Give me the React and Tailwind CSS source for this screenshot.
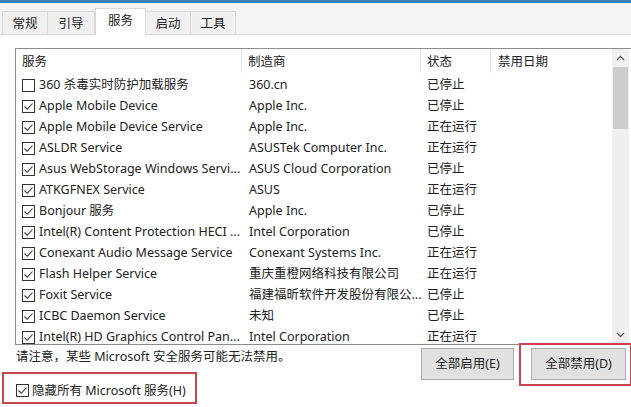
import React from "react";

const rows = [
  ["360 杀毒实时防护加载服务", "360.cn", "已停止", false],
  ["Apple Mobile Device", "Apple Inc.", "已停止", true],
  ["Apple Mobile Device Service", "Apple Inc.", "正在运行", true],
  ["ASLDR Service", "ASUSTek Computer Inc.", "正在运行", true],
  ["Asus WebStorage Windows Servi...", "ASUS Cloud Corporation", "已停止", true],
  ["ATKGFNEX Service", "ASUS", "正在运行", true],
  ["Bonjour 服务", "Apple Inc.", "已停止", true],
  ["Intel(R) Content Protection HECI ...", "Intel Corporation", "已停止", true],
  ["Conexant Audio Message Service", "Conexant Systems Inc.", "正在运行", true],
  ["Flash Helper Service", "重庆重橙网络科技有限公司", "正在运行", true],
  ["Foxit Service", "福建福昕软件开发股份有限公...", "已停止", true],
  ["ICBC Daemon Service", "未知", "已停止", true],
  ["Intel(R) HD Graphics Control Pan...", "Intel Corporation", "正在运行", true],
];

function Box({ checked }) {
  return (
    <span className="w-[13px] h-[13px] border border-[#333] bg-white flex items-center justify-center shrink-0">
      {checked && (
        <svg width="11" height="11" viewBox="0 0 11 11">
          <path d="M1.5 5.5 L4.3 8.3 L9.5 2.5" fill="none" stroke="#333" strokeWidth="1.1" />
        </svg>
      )}
    </span>
  );
}

const tabs = [
  ["常规", "w-[46px]"],
  ["引导", "w-[48px]"],
  ["服务", "w-[51px]"],
  ["启动", "w-[46px]"],
  ["工具", "w-[46px]"],
];

export default function App() {
  return (
    <div
      className="w-[631px] h-[407px] bg-white relative overflow-hidden text-[12.5px] text-[#222] leading-none"
      style={{ fontFamily: '"Noto Sans", "Noto Sans CJK SC", sans-serif' }}
    >
      <div className="h-[3px] bg-[#3b80b8]" />
      <div className="h-[32px] bg-[#f3f3f3] flex items-end pl-[2px] border-b border-[#d9d9d9]">
        {tabs.map(([t, w], i) =>
          i === 2 ? (
            <div
              key={t}
              className={`${w} h-[27px] -mb-px bg-white border border-b-0 border-[#d9d9d9] flex items-center justify-center pb-[2px]`}
            >
              {t}
            </div>
          ) : (
            <div
              key={t}
              className={`${w} h-[23px] bg-[#f0f0f0] border border-b-0 border-[#d9d9d9] -ml-px first:ml-0 flex items-center justify-center pt-[2px]`}
            >
              {t}
            </div>
          )
        )}
      </div>

      <div className="ml-[15px] mt-[13px] w-[617px] h-[297px] border border-[#8c8c8c] flex overflow-hidden">
        <div className="flex-1 flex flex-col">
          <div className="h-[24px] flex shrink-0">
            <div className="w-[226px] pl-[6px] pt-[2px] flex items-center border-r border-[#e5e5e5]">服务</div>
            <div className="w-[179px] pl-[6px] pt-[2px] flex items-center border-r border-[#e5e5e5]">制造商</div>
            <div className="w-[70px] pl-[6px] pt-[2px] flex items-center border-r border-[#e5e5e5]">状态</div>
            <div className="flex-1 pl-[7px] pt-[2px] flex items-center">禁用日期</div>
          </div>
          {rows.map(([name, maker, status, checked]) => (
            <div key={name} className="h-[21px] flex items-center shrink-0 pt-[4px]">
              <div className="w-[226px] pl-[6px] flex items-center gap-[4px] whitespace-nowrap">
                <Box checked={checked} />
                <span>{name}</span>
              </div>
              <div className="w-[179px] pl-[7px] whitespace-nowrap">{maker}</div>
              <div className="w-[70px] pl-[6px] whitespace-nowrap">{status}</div>
              <div className="flex-1" />
            </div>
          ))}
        </div>
        <div className="w-[17px] mr-[2px] bg-[#f0f0f0] flex flex-col items-center">
          <div className="h-[18px] w-full flex items-center justify-center">
            <svg width="9" height="6" viewBox="0 0 9 6">
              <path d="M1 5 L4.5 1.5 L8 5" fill="none" stroke="#606060" strokeWidth="1.3" />
            </svg>
          </div>
          <div className="w-[15px] h-[62px] bg-[#cdcdcd]" />
          <div className="flex-1" />
          <div className="h-[18px] w-full flex items-center justify-center">
            <svg width="9" height="6" viewBox="0 0 9 6">
              <path d="M1 1 L4.5 4.5 L8 1" fill="none" stroke="#606060" strokeWidth="1.3" />
            </svg>
          </div>
        </div>
      </div>

      <div className="flex">
        <div className="pl-[16px] pt-[6px] whitespace-nowrap">请注意，某些 Microsoft 安全服务可能无法禁用。</div>
        <div className="flex-1" />
        <div className="flex gap-[17px] pt-[3px] pr-[5px]">
          <div className="w-[93px] h-[32px] bg-[#e1e1e1] border border-[#adadad] flex items-center justify-center pt-[1px]">
            全部启用(E)
          </div>
          <div className="w-[95px] h-[32px] bg-[#e1e1e1] border border-[#adadad] flex items-center justify-center pt-[1px]">
            全部禁用(D)
          </div>
        </div>
      </div>

      <div className="absolute left-[16px] top-[383px] flex items-center gap-[3px] whitespace-nowrap">
        <Box checked />
        <span className="pt-[2px]">隐藏所有 Microsoft 服务(H)</span>
      </div>

      <div className="absolute left-[2px] top-[372px] w-[195px] h-[32px] border-2 border-[#c9444e]" />
      <div className="absolute left-[519px] top-[343px] w-[113px] h-[43px] border-2 border-[#c9444e]" />
    </div>
  );
}
